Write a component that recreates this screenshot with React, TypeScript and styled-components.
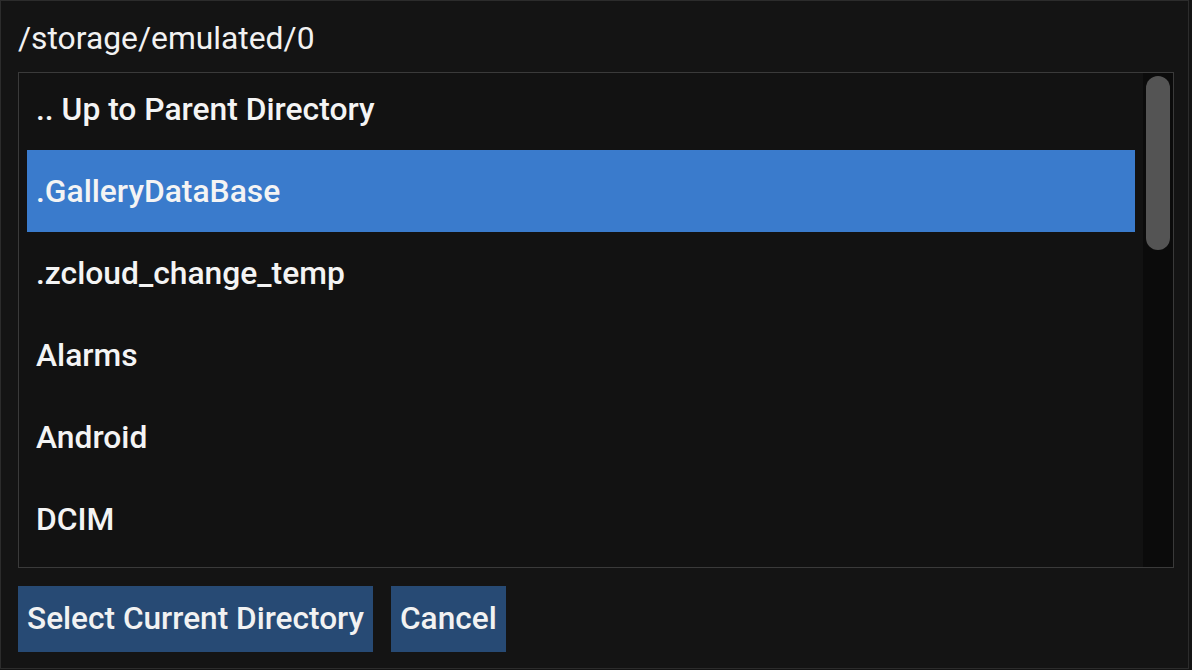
import React from "react";
import styled, { createGlobalStyle } from "styled-components";

const Global = createGlobalStyle`
  html, body { margin: 0; padding: 0; background: #141414; }
  body { font-family: Roboto, "Noto Sans", sans-serif; color: #fff; }
`;

const Window = styled.div`
  box-sizing: border-box;
  width: 1189px;
  height: 669px;
  border: 1px solid #2c2c2c;
  background: #141414;
  padding: 17px 17px 0 17px;
  display: flex;
  flex-direction: column;
`;

const PathTitle = styled.div`
  font-size: 31.8px;
  font-weight: 400;
  line-height: 40px;
  height: 54px;
  color: #f2f2f2;
  white-space: nowrap;
`;

const ListBox = styled.div`
  box-sizing: border-box;
  width: 1156px;
  height: 496px;
  border: 1px solid #3a3a3a;
  background: #121212;
  display: flex;
  overflow: hidden;
`;

const Items = styled.div`
  flex: 1;
  padding: 0 8px;
  overflow: hidden;
`;

const ItemsInner = styled.div`
  margin-top: -5px;
  display: flex;
  flex-direction: column;
`;

const Row = styled.div<{ $selected?: boolean }>`
  height: 82px;
  display: flex;
  align-items: center;
  padding-left: 9px;
  font-size: 31.8px;
  font-weight: 500;
  white-space: nowrap;
  color: #f4f4f4;
  background: ${(p) => (p.$selected ? "#3a7bcc" : "transparent")};
`;

const Track = styled.div`
  width: 30px;
  background: #0b0b0b;
  padding: 3px 3px;
  box-sizing: border-box;
`;

const Thumb = styled.div`
  width: 24px;
  height: 174px;
  border-radius: 12px;
  background: #545454;
`;

const Actions = styled.div`
  display: flex;
  gap: 18px;
  margin-top: 18px;
`;

const Button = styled.button`
  height: 66px;
  padding: 0 9px;
  border: none;
  background: #274a74;
  color: #f2f2f2;
  font-family: Roboto, "Noto Sans", sans-serif;
  font-size: 31.6px;
  font-weight: 500;
  line-height: 40px;
  white-space: nowrap;
  display: flex;
  align-items: center;
  cursor: pointer;
`;

const items = [
  ".. Up to Parent Directory",
  ".GalleryDataBase",
  ".zcloud_change_temp",
  "Alarms",
  "Android",
  "DCIM",
  "Documents",
];

export default function App() {
  return (
    <>
      <Global />
      <Window>
        <PathTitle>/storage/emulated/0</PathTitle>
        <ListBox>
          <Items>
            <ItemsInner>
              {items.map((it, i) => (
                <Row key={it} $selected={i === 1}>
                  {it}
                </Row>
              ))}
            </ItemsInner>
          </Items>
          <Track>
            <Thumb />
          </Track>
        </ListBox>
        <Actions>
          <Button>Select Current Directory</Button>
          <Button>Cancel</Button>
        </Actions>
      </Window>
    </>
  );
}
